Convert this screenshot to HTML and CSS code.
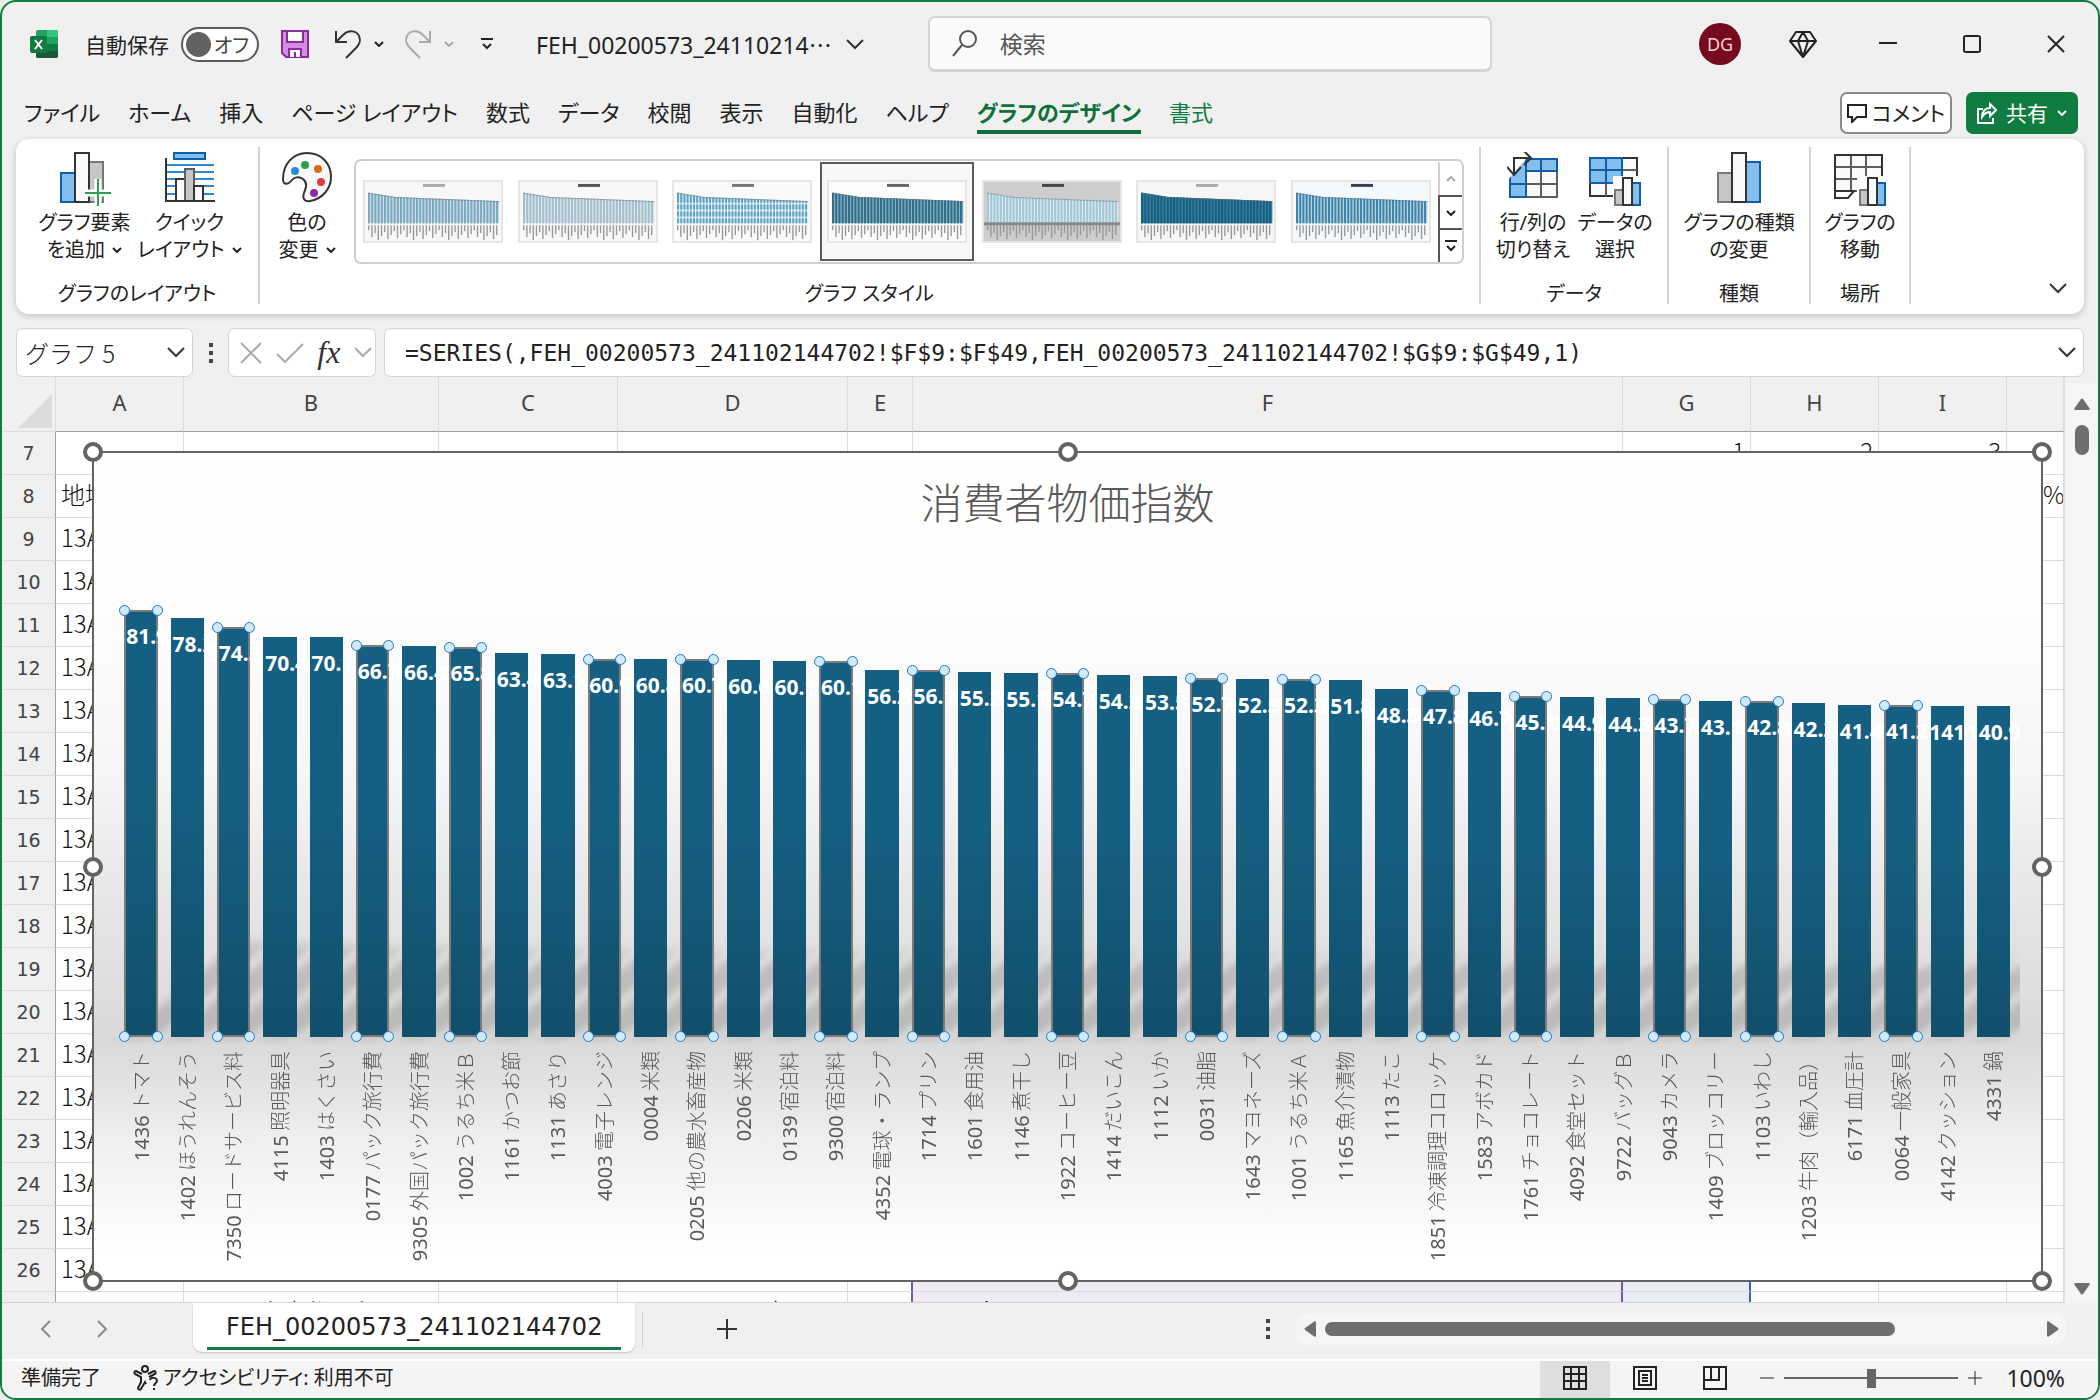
FILE: index.html
```html
<!DOCTYPE html>
<html lang="ja">
<head>
    <meta charset="UTF-8">
    <meta name="viewport" content="width=device-width, initial-scale=1.0">
    <title>FEH_00200573_241102144702 - Excel</title>
    <link rel="stylesheet" href="styles.css">
</head>
<body>
<div class="window">

    <!-- Title bar -->
    <header class="titlebar">
        <svg class="app-icon" width="30" height="30" viewBox="0 0 30 30">
            <rect x="7" y="1" width="22" height="28" rx="2" fill="#21a366"/>
            <path d="M18 1h9a2 2 0 0 1 2 2v5H18z" fill="#33c481"/>
            <path d="M7 8h11v7H7z" fill="#107c41"/>
            <path d="M7 15h11v7H7z" fill="#185c37"/>
            <path d="M18 15h11v7H18z" fill="#107c41"/>
            <path d="M7 22h22v5a2 2 0 0 1-2 2H9a2 2 0 0 1-2-2z" fill="#185c37"/>
            <rect x="1" y="7" width="17" height="17" rx="2" fill="#107c41"/>
            <path d="M6 11l7 9M13 11l-7 9" stroke="#fff" stroke-width="2" fill="none"/>
        </svg>
        <label class="autosave">
            自動保存
            <input type="checkbox" class="autosave-input">
            <span class="switch"><i></i>オフ</span>
        </label>
        <button class="icon-btn save" aria-label="上書き保存">
            <svg width="30" height="30" viewBox="0 0 30 30" fill="none" stroke="#8a2d9c" stroke-width="2">
                <path d="M2 2h26v26H6l-4-4z" fill="#d58be0"/>
                <path d="M7 2h16v11H7z" fill="#fafafa"/>
                <path d="M9 28v-8h12v8" fill="#fafafa"/>
                <path d="M15 23v5"/>
            </svg>
        </button>
        <button class="icon-btn undo" aria-label="元に戻す">
            <svg width="28" height="30" viewBox="0 0 28 30" fill="none" stroke="#333" stroke-width="2">
                <path d="M2 2v11h11M2 13L9 6c6-6 14-4 16 1s1 8-3 12L12 29"/>
            </svg>
            <svg class="caret" width="10" height="6" viewBox="0 0 10 6"><path d="M1 1l4 4 4-4"/></svg>
        </button>
        <button class="icon-btn redo" aria-label="やり直し">
            <svg width="28" height="30" viewBox="0 0 28 30" fill="none" stroke="#aaa" stroke-width="2">
                <path d="M26 2v11H15M26 13l-7-7C13 0 5 2 3 7s-1 8 3 12l10 10"/>
            </svg>
            <svg class="caret light" width="10" height="6" viewBox="0 0 10 6"><path d="M1 1l4 4 4-4"/></svg>
        </button>
        <button class="icon-btn customize" aria-label="クイック アクセス ツール バーのユーザー設定">
            <svg width="14" height="12" viewBox="0 0 14 12" fill="none" stroke="#222" stroke-width="2"><path d="M1 1h12M3 6l4 4 4-4"/></svg>
        </button>
        <button class="filename">FEH_00200573_24110214⋯
            <svg width="18" height="11" viewBox="0 0 18 11"><path d="M1 1l8 8 8-8"/></svg>
        </button>
        <label class="search">
            <svg width="26" height="27" viewBox="0 0 26 27" fill="none" stroke="#555" stroke-width="2"><circle cx="16" cy="9" r="8"/><path d="M10 15L1 26"/></svg>
            <input type="text" placeholder="検索" aria-label="検索">
        </label>
        <div class="window-tools">
            <span class="avatar">DG</span>
            <button class="icon-btn premium" aria-label="Premium">
                <svg width="28" height="27" viewBox="0 0 28 27" fill="none" stroke="#222" stroke-width="2" stroke-linejoin="round">
                    <path d="M7 1h14l6 9-13 16L1 10zM1 10h26M9 10l5 16 5-16M9 10l5-9 5 9"/>
                </svg>
            </button>
            <button class="icon-btn" aria-label="最小化"><svg width="18" height="20" viewBox="0 0 18 20" stroke="#222" stroke-width="2"><path d="M0 9h18"/></svg></button>
            <button class="icon-btn" aria-label="最大化"><svg width="18" height="18" viewBox="0 0 18 18" fill="none" stroke="#222" stroke-width="2"><rect x="1" y="1" width="16" height="16" rx="2"/></svg></button>
            <button class="icon-btn" aria-label="閉じる"><svg width="18" height="18" viewBox="0 0 18 18" fill="none" stroke="#222" stroke-width="2"><path d="M1 1l16 16M17 1L1 17"/></svg></button>
        </div>
    </header>

    <!-- Ribbon tabs -->
    <nav class="tabs">
        <button>ファイル</button>
        <button>ホーム</button>
        <button>挿入</button>
        <button>ページ レイアウト</button>
        <button>数式</button>
        <button>データ</button>
        <button>校閲</button>
        <button>表示</button>
        <button>自動化</button>
        <button>ヘルプ</button>
        <button class="active">グラフのデザイン</button>
        <button class="context">書式</button>
        <div class="tab-actions">
            <button class="comment">
                <svg width="20" height="20" viewBox="0 0 20 20" fill="none" stroke="#222" stroke-width="2"><path d="M1 2h18v12h-9l-5 5v-5H1z"/></svg>
                コメント
            </button>
            <button class="share">
                <svg width="20" height="22" viewBox="0 0 20 22" fill="none" stroke="#fff" stroke-width="2"><path d="M6 7H1v14h15v-5M13 2l6 6-6 6v-4c-4 0-6 2-8 5 0-5 3-9 8-9z"/></svg>
                共有
                <svg class="caret" width="10" height="6" viewBox="0 0 10 6"><path d="M1 1l4 4 4-4"/></svg>
            </button>
        </div>
    </nav>

    <!-- Ribbon -->
    <section class="ribbon">
        <div class="group group-layout">
            <div class="group-body">
                <button class="big">
                    <svg width="52" height="54" viewBox="0 0 52 54" fill="none" stroke-width="2">
                        <rect x="2" y="21" width="14" height="29" fill="#83beec" stroke="#0f5ea8"/>
                        <rect x="30" y="10" width="14" height="40" fill="#c8c6c4" stroke="#797774"/>
                        <rect x="16" y="1" width="14" height="49" fill="#fafafa" stroke="#333"/>
                        <path d="M39 27v27M26 41h26" stroke="#fff" stroke-width="7"/>
                        <path d="M39 27v27M26 41h26" stroke="#2f9e58"/>
                    </svg>
                    <span>グラフ要素<br>を追加 <svg class="caret" width="10" height="6" viewBox="0 0 10 6"><path d="M1 1l4 4 4-4"/></svg></span>
                </button>
                <button class="big">
                    <svg width="52" height="54" viewBox="0 0 52 54" fill="none" stroke-width="2">
                        <rect x="10" y="1" width="31" height="6" fill="#83beec" stroke="#0f5ea8"/>
                        <path d="M2 13h48M2 20h48M2 27h48M2 34h48M2 42h48" stroke="#2b88d8"/>
                        <rect x="12" y="27" width="9" height="22" fill="#fafafa" stroke="#333"/>
                        <rect x="21" y="17" width="9" height="32" fill="#c8c6c4" stroke="#605e5c"/>
                        <rect x="30" y="34" width="9" height="15" fill="#fafafa" stroke="#333"/>
                        <path d="M2 6v43h49" stroke="#333"/>
                    </svg>
                    <span>クイック<br>レイアウト <svg class="caret" width="10" height="6" viewBox="0 0 10 6"><path d="M1 1l4 4 4-4"/></svg></span>
                </button>
            </div>
            <div class="group-name">グラフのレイアウト</div>
        </div>

        <div class="group group-styles">
            <div class="group-body">
                <button class="big">
                    <svg width="52" height="54" viewBox="0 0 52 54">
                        <path d="M26 1C12 1 2 12 2 27c0 6 5 6 8 2s8-5 12-2c5 4 3 9 1 14-2 6 1 9 6 8 12-2 21-12 21-24C50 11 40 1 26 1z" fill="#fafafa" stroke="#333" stroke-width="2"/>
                        <circle cx="14" cy="19" r="4" fill="#2b88d8"/>
                        <circle cx="24" cy="13" r="4" fill="#2f9e48"/>
                        <circle cx="37" cy="17" r="4" fill="#d86c12"/>
                        <circle cx="40" cy="30" r="4" fill="#e23b3f"/>
                        <circle cx="33" cy="41" r="4" fill="#8a2da5"/>
                    </svg>
                    <span>色の<br>変更 <svg class="caret" width="10" height="6" viewBox="0 0 10 6"><path d="M1 1l4 4 4-4"/></svg></span>
                </button>
                <div class="gallery">
                    <div class="thumbs" id="thumbs"></div>
                    <div class="gallery-scroll">
                        <button class="off" aria-label="上へ"><svg class="caret" width="10" height="6" viewBox="0 0 10 6"><path d="M1 5l4-4 4 4"/></svg></button>
                        <button aria-label="下へ"><svg class="caret" width="10" height="6" viewBox="0 0 10 6"><path d="M1 1l4 4 4-4"/></svg></button>
                        <button aria-label="その他"><svg class="caret" width="12" height="12" viewBox="0 0 12 12"><path d="M0 1h12M2 6l4 4 4-4"/></svg></button>
                    </div>
                </div>
            </div>
            <div class="group-name">グラフ スタイル</div>
        </div>

        <div class="group group-data">
            <div class="group-body">
                <button class="big">
                    <svg width="52" height="54" viewBox="0 0 52 54" fill="none" stroke-width="2">
                        <rect x="3" y="7" width="47" height="38" fill="#fafafa" stroke="#333"/>
                        <path d="M3 7h47v12H19v26H3z" fill="#83beec"/>
                        <path d="M19 32h31M34 19v26M19 45h31V19" stroke="#605e5c"/>
                        <path d="M50 7H19v12h31zM34 7v12M3 19v26h16V19M3 32h16" stroke="#0f5ea8"/>
                        <path d="M0 0h25L0 29z" fill="#fff"/>
                        <path d="M7 22V6h16M17-1l7 7-7 7M0 15l7 8 7-8" stroke="#333"/>
                    </svg>
                    <span>行/列の<br>切り替え</span>
                </button>
                <button class="big">
                    <svg width="52" height="54" viewBox="0 0 52 54" fill="none" stroke-width="2">
                        <rect x="1" y="6" width="47" height="38" fill="#fafafa" stroke="#333"/>
                        <path d="M33 18h15M1 31h47M17 31v13" stroke="#605e5c"/>
                        <path d="M1 6h32v25H1zM17 6v25M1 18h32" fill="#83beec" stroke="#0f5ea8"/>
                        <path d="M24 36V24h28v30H24z" fill="#fff"/>
                        <rect x="26" y="38" width="8" height="15" fill="#c8c6c4" stroke="#797774"/>
                        <rect x="43" y="31" width="8" height="22" fill="#83beec" stroke="#0f5ea8"/>
                        <rect x="34" y="26" width="9" height="27" fill="#fafafa" stroke="#333"/>
                    </svg>
                    <span>データの<br>選択</span>
                </button>
            </div>
            <div class="group-name">データ</div>
        </div>

        <div class="group group-type">
            <div class="group-body">
                <button class="big">
                    <svg width="52" height="54" viewBox="0 0 52 54" fill="none" stroke-width="2">
                        <rect x="5" y="21" width="14" height="29" fill="#c8c6c4" stroke="#797774"/>
                        <rect x="33" y="10" width="14" height="40" fill="#83beec" stroke="#0f5ea8"/>
                        <rect x="19" y="1" width="14" height="49" fill="#fafafa" stroke="#333"/>
                    </svg>
                    <span>グラフの種類<br>の変更</span>
                </button>
            </div>
            <div class="group-name">種類</div>
        </div>

        <div class="group group-place">
            <div class="group-body">
                <button class="big">
                    <svg width="52" height="54" viewBox="0 0 52 54" fill="none" stroke-width="2">
                        <path d="M1 3h47v36H1zM1 15h47M1 27h47M17 3v36M32 3v36" fill="#fafafa" stroke="#605e5c"/>
                        <path d="M48 24V3H1v43h13l6-7H1" stroke="#333"/>
                        <path d="M23 36V24h29v30H23z" fill="#fff"/>
                        <rect x="26" y="38" width="8" height="15" fill="#c8c6c4" stroke="#797774"/>
                        <rect x="43" y="31" width="8" height="22" fill="#83beec" stroke="#0f5ea8"/>
                        <rect x="34" y="26" width="9" height="27" fill="#fafafa" stroke="#333"/>
                    </svg>
                    <span>グラフの<br>移動</span>
                </button>
            </div>
            <div class="group-name">場所</div>
        </div>
        <button class="collapse" aria-label="リボンを折りたたむ"><svg width="18" height="11" viewBox="0 0 18 11"><path d="M1 1l8 8 8-8"/></svg></button>
    </section>

    <!-- Formula bar -->
    <section class="formula-bar">
        <div class="box name-box">
            <input type="text" value="グラフ 5" aria-label="名前ボックス">
            <button aria-label="名前の一覧"><svg width="18" height="11" viewBox="0 0 18 11"><path d="M1 1l8 8 8-8"/></svg></button>
        </div>
        <span class="dots"><i></i><i></i><i></i></span>
        <div class="box fx-box">
            <button aria-label="キャンセル"><svg class="dim" width="22" height="22" viewBox="0 0 22 22"><path d="M1 1l20 20M21 1L1 21"/></svg></button>
            <button aria-label="入力"><svg class="dim" width="28" height="20" viewBox="0 0 28 20"><path d="M1 11l8 8L27 1"/></svg></button>
            <button class="fx" aria-label="関数の挿入">fx</button>
            <button aria-label="関数の一覧"><svg class="dim" width="18" height="11" viewBox="0 0 18 11"><path d="M1 1l8 8 8-8"/></svg></button>
        </div>
        <div class="box formula-box">
            <input type="text" aria-label="数式バー" value="=SERIES(,FEH_00200573_241102144702!$F$9:$F$49,FEH_00200573_241102144702!$G$9:$G$49,1)">
            <button aria-label="数式バーの展開"><svg width="18" height="11" viewBox="0 0 18 11"><path d="M1 1l8 8 8-8"/></svg></button>
        </div>
    </section>

    <!-- Sheet with the chart on top -->
    <main class="sheet">
        <div class="grid">
            <table>
                <colgroup>
                    <col class="c-head"><col class="c-a"><col class="c-b"><col class="c-c"><col class="c-d">
                    <col class="c-e"><col class="c-f"><col class="c-g"><col class="c-h"><col class="c-i"><col>
                </colgroup>
                <thead>
                    <tr>
                        <th class="corner"><svg width="34" height="34" viewBox="0 0 34 34"><path d="M34 0v34H0z" fill="#dcdcdc"/></svg></th>
                        <th>A</th><th>B</th><th>C</th><th>D</th><th>E</th><th>F</th><th>G</th><th>H</th><th>I</th><th></th>
                    </tr>
                </thead>
                <tbody id="rows"></tbody>
            </table>

            <div class="chart">
                <h1>消費者物価指数</h1>
                <div class="plot" id="plot"></div>
                <div class="axis" id="axis"></div>
                <i class="handle n w"></i><i class="handle n m"></i><i class="handle n e"></i>
                <i class="handle c w"></i><i class="handle c e"></i>
                <i class="handle s w"></i><i class="handle s m"></i><i class="handle s e"></i>
            </div>
        </div>
        <div class="vscroll">
            <svg width="16" height="12" viewBox="0 0 16 12"><path d="M7 1q1-1 2 0l7 10-1 1H1l-1-1z"/></svg>
            <span class="vthumb"></span>
            <svg class="down" width="16" height="12" viewBox="0 0 16 12"><path d="M7 11q1 1 2 0l7-10-1-1H1L0 1z"/></svg>
        </div>
    </main>

    <!-- Sheet tabs -->
    <section class="sheetbar">
        <button class="step" aria-label="前のシート"><svg width="11" height="18" viewBox="0 0 11 18"><path d="M10 1L2 9l8 8"/></svg></button>
        <button class="step" aria-label="次のシート"><svg width="11" height="18" viewBox="0 0 11 18"><path d="M1 1l8 8-8 8"/></svg></button>
        <button class="sheet-tab"><span>FEH_00200573_241102144702</span></button>
        <button class="add" aria-label="新しいシート"><svg width="20" height="20" viewBox="0 0 20 20"><path d="M10 0v20M0 10h20"/></svg></button>
        <span class="dots"><i></i><i></i><i></i></span>
        <div class="hscroll">
            <svg width="12" height="16" viewBox="0 0 12 16"><path d="M1 7q-1 1 0 2l10 7 1-1V1l-1-1z"/></svg>
            <div class="htrack"><span class="hthumb"></span></div>
            <svg width="12" height="16" viewBox="0 0 12 16"><path d="M11 7q1 1 0 2L1 16l-1-1V1l1-1z"/></svg>
        </div>
    </section>

    <!-- Status bar -->
    <footer class="status">
        <span>準備完了</span>
        <button class="access">
            <svg width="26" height="26" viewBox="0 0 26 26" fill="none" stroke="#222" stroke-width="2">
                <circle cx="12" cy="4" r="3"/>
                <path d="M15 9l6-3c2 0 2 2 1 3l-6 3M9 9L3 6C1 6 1 8 2 9l6 3v5L5 23c0 2 2 2 3 1l4-7 1 2"/>
                <path d="M17 15c1-3 7-3 7 1 0 2-3 2-3 5M21 23v2"/>
            </svg>
            アクセシビリティ: 利用不可
        </button>
        <div class="views">
            <button class="on" aria-label="標準"><svg width="24" height="24" viewBox="0 0 24 24"><path d="M1 1h22v22H1zM1 8h22M1 15h22M8 1v22M16 1v22"/></svg></button>
            <button aria-label="ページ レイアウト"><svg width="24" height="24" viewBox="0 0 24 24"><path d="M1 1h22v22H1zM6 5h12v14H6zM9 9h6M9 12h6M9 15h6"/></svg></button>
            <button aria-label="改ページ プレビュー"><svg width="24" height="24" viewBox="0 0 24 24"><path d="M1 1h22v22H1zM8 1v13H1M8 14h8V1"/></svg></button>
        </div>
        <div class="zoom">
            <button aria-label="縮小"><svg width="14" height="14" viewBox="0 0 14 14"><path d="M0 7h14"/></svg></button>
            <input type="range" min="0" max="100" value="50" aria-label="ズーム">
            <button aria-label="拡大"><svg width="14" height="14" viewBox="0 0 14 14"><path d="M0 7h14M7 0v14"/></svg></button>
            <button class="percent">100%</button>
        </div>
    </footer>
</div>
<script src="script.js"></script>
</body>
</html>
```
FILE: styles.css
```css
* {
    box-sizing: border-box;
}
body {
    margin: 0;
    background: #e8efe9;
    color: #222;
    font-family: "Noto Sans", "Noto Sans CJK JP", sans-serif;
    font-size: 21px;
    font-feature-settings: "palt";
}
button, input {
    font: inherit;
    font-feature-settings: inherit;
    color: inherit;
    background: none;
    border: none;
    padding: 0;
    margin: 0;
    min-width: 0;
}
button {
    cursor: pointer;
    white-space: nowrap;
}
svg {
    display: block;
    flex: none;
}
.window {
    display: flex;
    flex-direction: column;
    height: 100vh;
    background: #f0f0f0;
    border: 2px solid #107c41;
    border-radius: 16px;
    overflow: hidden;
}
.caret {
    fill: none;
    stroke: #222;
    stroke-width: 2;
}
.caret.light {
    stroke: #aaa;
}

/* Title bar */
.titlebar {
    display: flex;
    align-items: center;
    flex: none;
    height: 84px;
    padding: 0 33px 0 27px;
}
.icon-btn {
    display: flex;
    align-items: center;
    gap: 12px;
}
.autosave {
    display: flex;
    align-items: center;
    gap: 12px;
    margin-left: 26px;
}
.autosave-input {
    position: absolute;
    opacity: 0;
}
.switch {
    display: flex;
    align-items: center;
    justify-content: space-between;
    width: 78px;
    height: 35px;
    padding: 0 8px 0 3px;
    background: #fff;
    border: 2px solid #5c5c5c;
    border-radius: 18px;
    color: #444;
    font-size: 20px;
}
.switch i {
    width: 25px;
    height: 25px;
    border-radius: 50%;
    background: #616161;
}
.save {
    margin-left: 21px;
}
.undo {
    margin-left: 24px;
}
.redo {
    margin-left: 20px;
}
.customize {
    margin-left: 26px;
}
.filename {
    display: flex;
    align-items: center;
    gap: 14px;
    margin-left: 42px;
    font-size: 23px;
}
.filename svg, .collapse svg, .box svg, .step svg, .add svg {
    fill: none;
    stroke: #333;
    stroke-width: 2;
}
.search {
    display: flex;
    align-items: center;
    gap: 22px;
    flex: 0 1 564px;
    height: 56px;
    margin-left: 64px;
    padding: 0 22px;
    background: #fafafa;
    border: 2px solid #d4d4d4;
    border-bottom-width: 3px;
    border-radius: 7px;
    font-size: 23px;
}
.search input {
    flex: 1;
    outline: none;
}
.search input::placeholder {
    color: #555;
    opacity: 1;
}
.window-tools {
    display: flex;
    align-items: center;
    gap: 66px;
    margin-left: auto;
}
.avatar {
    width: 42px;
    height: 42px;
    margin-right: -18px;
    border-radius: 50%;
    background: #750b1c;
    color: #f0d0d4;
    font-size: 18px;
    line-height: 42px;
    text-align: center;
}
.premium {
    margin-right: -4px;
}

/* Ribbon tabs */
.tabs {
    display: flex;
    align-items: center;
    gap: 28px;
    flex: none;
    height: 53px;
    padding: 0 20px 0 22px;
    font-size: 22px;
}
.tabs > button {
    height: 43px;
    padding-top: 2px;
    border-bottom: 4px solid transparent;
    line-height: 34px;
}
.tabs .active {
    color: #0f703b;
    border-bottom-color: #0f703b;
    font-weight: bold;
}
.tabs .context {
    color: #107c41;
}
.tab-actions {
    display: flex;
    gap: 14px;
    margin-left: auto;
    font-size: 21px;
}
.tab-actions button {
    display: flex;
    align-items: center;
    justify-content: center;
    gap: 5px;
    width: 112px;
    height: 42px;
    border-radius: 7px;
    line-height: 30px;
}
.comment {
    background: #fff;
    border: 2px solid #8a8a8a;
}
.tab-actions .share {
    gap: 9px;
    background: #107c41;
    color: #fff;
}
.share .caret {
    stroke: #fff;
}

/* Ribbon */
.ribbon {
    display: flex;
    flex: none;
    height: 175px;
    margin: 0 14px;
    padding: 8px 0 10px;
    background: #fff;
    border-radius: 13px;
    box-shadow: 0 2px 6px rgba(0, 0, 0, 0.2);
    font-size: 20px;
}
.group {
    display: flex;
    flex-direction: column;
    border-right: 2px solid #d4d4d4;
}
.group-body {
    display: flex;
    justify-content: center;
    flex: 1;
}
.group-name {
    height: 20px;
    line-height: 20px;
    text-align: center;
}
.group-layout {
    width: 244px;
}
.group-layout .big {
    width: 105px;
}
.group-styles {
    flex: 0 1 1221px;
    min-width: 0;
}
.group-styles .group-body {
    justify-content: flex-start;
}
.group-styles .big {
    flex: none;
    width: 94px;
}
.group-data {
    width: 188px;
}
.group-data .big {
    width: 82px;
}
.group-type {
    width: 142px;
}
.group-place {
    width: 100px;
}
.big {
    display: flex;
    flex-direction: column;
    align-items: center;
    gap: 3px;
    padding-top: 5px;
    line-height: 27px;
}
.big .caret {
    display: inline-block;
    margin: 0 0 4px 2px;
}
.gallery {
    display: flex;
    flex: 0 1 1110px;
    min-width: 0;
    height: 105px;
    margin-top: 12px;
    border: 2px solid #cfcfcf;
    border-radius: 7px;
    overflow: hidden;
}
.thumbs {
    display: flex;
    flex: 1;
    min-width: 0;
}
.thumb {
    display: flex;
    align-items: center;
    justify-content: center;
    flex: 1;
    margin: 1px 0;
    border: 2px solid transparent;
}
.thumb svg {
    width: 93%;
    height: 63px;
}
.thumb.selected {
    border-color: #5c5c5c;
    background: #f7f7f7;
}
.gallery-scroll {
    display: flex;
    flex-direction: column;
    width: 24px;
}
.gallery-scroll button {
    display: flex;
    align-items: center;
    justify-content: center;
    flex: 1;
    border: 2px solid #555;
    border-width: 2px 0 0 2px;
}
.gallery-scroll .off {
    border-color: transparent transparent transparent #cfcfcf;
}
.gallery-scroll .off .caret {
    stroke: #aaa;
}
.collapse {
    margin: auto 17px 10px auto;
}

/* Formula bar */
.formula-bar {
    display: flex;
    align-items: center;
    flex: none;
    gap: 9px;
    height: 49px;
    margin: 14px 14px 0;
}
.box {
    display: flex;
    align-items: center;
    height: 49px;
    background: #fff;
    border: 1px solid #d4d4d4;
    border-radius: 7px;
}
.name-box {
    width: 177px;
    padding: 0 7px 0 8px;
    font-family: "Noto Sans CJK JP", sans-serif;
    font-size: 24px;
    font-weight: 300;
    font-feature-settings: normal;
}
.name-box input {
    flex: 1;
}
.dots {
    display: flex;
    flex-direction: column;
    justify-content: center;
    gap: 4px;
    width: 17px;
    align-items: center;
}
.dots i {
    width: 4px;
    height: 4px;
    background: #444;
}
.fx-box {
    justify-content: space-between;
    width: 148px;
    padding: 0 3px 0 11px;
}
.box .dim {
    stroke: #aaa;
}
.fx {
    font: italic 32px "Liberation Serif", serif;
    color: #333;
}
.formula-box {
    flex: 1;
    margin-left: -1px;
    padding: 0 7px 0 20px;
    font-family: "DejaVu Sans Mono", monospace;
    font-size: 23px;
}
.formula-box input {
    flex: 1;
    height: 44px;
    line-height: 44px;
}

/* Sheet */
.sheet {
    display: flex;
    flex: 1;
    min-height: 0;
}
.grid {
    flex: 1;
    min-width: 0;
    overflow: hidden;
    position: relative;
    border-bottom: 1px solid #d4d4d4;
    border-right: 1px solid #e0e0e0;
}
table {
    width: 100%;
    table-layout: fixed;
    border-collapse: separate;
    border-spacing: 0;
    background: #fff;
}
.c-head { width: 54px; }
.c-a, .c-g, .c-h, .c-i { width: 128px; }
.c-b { width: 255px; }
.c-c { width: 179px; }
.c-d { width: 230px; }
.c-e { width: 65px; }
.c-f { width: 710px; }
th {
    height: 43px;
    padding: 0;
    background: #f0f0f0;
    border-right: 1px solid #dcdcdc;
    border-bottom: 1px solid #dcdcdc;
    color: #444;
    font-family: "Noto Sans", sans-serif;
    font-size: 22px;
    font-weight: normal;
}
thead th {
    height: 55px;
    padding-bottom: 4px;
    border-bottom-color: #a0a0a0;
}
tbody th {
    border-right-color: #a0a0a0;
    font-family: "DejaVu Sans", sans-serif;
    font-size: 19px;
}
thead .corner {
    vertical-align: bottom;
    padding: 0 3px 3px 16px;
    border-bottom-color: #dcdcdc;
}
td {
    height: 43px;
    padding: 0 5px 5px;
    border-right: 1px solid #dcdcdc;
    border-bottom: 1px solid #dcdcdc;
    color: #111;
    font-family: "Noto Sans CJK JP", sans-serif;
    font-size: 24px;
    font-weight: 300;
    font-feature-settings: normal;
    line-height: 30px;
    white-space: nowrap;
    overflow: hidden;
}
.num {
    text-align: right;
}
.unit {
    padding-left: 12px;
}
.ref-e {
    border-right: 2px solid #7a55a8;
}
.ref-f {
    background: #eeebf6;
    border-right: 2px solid #7a55a8;
}
.ref-g {
    background: #e8edf7;
    border-right: 2px solid #3a63bd;
}

/* Chart */
.chart {
    display: flex;
    flex-direction: column;
    position: absolute;
    inset: 74px 21px 20px 90px;
    border: 2px solid #636363;
    background: linear-gradient(#fff 0%, #fdfdfd 20%, #f6f6f6 38%, #e8e8e8 52%, #d9d9d9 71%, #efefef 83%, #fff 97%);
    color: #595959;
}
.chart h1 {
    margin: 0;
    height: 114px;
    font-family: "Noto Sans CJK JP", sans-serif;
    font-size: 42px;
    font-weight: 300;
    font-feature-settings: normal;
    line-height: 96px;
    text-align: center;
}
.plot, .axis {
    display: flex;
    margin: 0 24px;
}
.plot {
    flex: 1;
    align-items: flex-end;
    isolation: isolate;
    clip-path: inset(0 -3px -7px -7px);
}
.slot {
    display: flex;
    justify-content: center;
    align-items: flex-end;
    flex: 1;
    min-width: 0;
    height: 100%;
}
.bar {
    width: 72%;
    position: relative;
    display: flex;
    justify-content: center;
    padding-top: 13px;
    background: linear-gradient(#156082 40%, #114f6b);
    color: #fff;
    font-size: 21px;
    font-weight: bold;
    line-height: 26px;
}
.bar::before {
    content: "";
    position: absolute;
    z-index: -1;
    left: 0;
    bottom: 0;
    width: 100%;
    height: 22%;
    background: rgba(70, 70, 70, 0.22);
    transform: skewX(-50deg);
    transform-origin: bottom;
    filter: blur(6px);
}
.bar.picked {
    box-shadow: inset 0 0 0 2px #7b7b7b;
}
.dot {
    position: absolute;
    width: 11px;
    height: 11px;
    border: 1px solid #2477b8;
    border-radius: 50%;
    background: #cfeafc;
}
.dot.tl { left: -5px; top: -5px; }
.dot.tr { right: -5px; top: -5px; }
.dot.bl { left: -5px; bottom: -5px; }
.dot.br { right: -5px; bottom: -5px; }
.axis {
    height: 243px;
    padding-top: 14px;
    font-size: 20px;
    font-feature-settings: normal;
}
.axis div {
    display: flex;
    justify-content: center;
    flex: 1;
    min-width: 0;
}
.axis span {
    align-self: flex-start;
    writing-mode: vertical-rl;
    text-orientation: sideways;
    transform: rotate(180deg);
    white-space: nowrap;
    line-height: 30px;
    font-family: "Noto Sans CJK JP", sans-serif;
    font-weight: 300;
}
.axis b {
    font-family: "Noto Sans", sans-serif;
    font-weight: 400;
}
.handle {
    position: absolute;
    width: 20px;
    height: 20px;
    border: 4px solid #636363;
    border-radius: 50%;
    background: #fff;
}
.handle.n { top: -11px; }
.handle.s { bottom: -11px; }
.handle.c { top: calc(50% - 10px); }
.handle.w { left: -11px; }
.handle.e { right: -11px; }
.handle.m { left: calc(50% - 10px); }

/* Scroll bars */
.vscroll {
    display: flex;
    flex-direction: column;
    align-items: center;
    gap: 15px;
    width: 33px;
    margin-top: 6px;
    padding: 15px 0 8px;
    background: #f5f5f5;
}
.vscroll svg, .hscroll svg {
    fill: #6e6e6e;
}
.vthumb {
    width: 14px;
    height: 30px;
    border-radius: 7px;
    background: #6e6e6e;
}
.down {
    margin-top: auto;
}

/* Sheet tabs */
.sheetbar {
    display: flex;
    align-items: center;
    flex: none;
    height: 56px;
    padding: 0 32px 4px 38px;
}
.step {
    width: 17px;
    margin-right: 40px;
}
.step svg {
    stroke: #8a8a8a;
}
.sheet-tab {
    align-self: flex-start;
    height: 49px;
    margin-left: 39px;
    padding: 0 14px;
    background: #fff;
    border-radius: 0 0 9px 9px;
    box-shadow: 0 1px 2px rgba(0, 0, 0, 0.2);
    font-family: "DejaVu Sans", sans-serif;
    font-size: 24px;
}
.sheet-tab span {
    display: block;
    height: 45px;
    padding: 0 19px;
    border-bottom: 3px solid #1b7a48;
    line-height: 44px;
}
.add {
    margin: 0 auto 0 7px;
    padding: 8px 0 8px 74px;
    border-left: 1px solid #d0d0d0;
}
.hscroll {
    display: flex;
    align-items: center;
    gap: 9px;
    flex: 0 0 38%;
    height: 32px;
    margin-left: 20px;
    padding: 0 7px 0 8px;
    background: #f5f5f5;
    border-radius: 12px;
}
.htrack {
    flex: 1;
}
.hthumb {
    display: block;
    width: 80%;
    height: 14px;
    border-radius: 7px;
    background: #6e6e6e;
}

/* Status bar */
.status {
    display: flex;
    align-items: center;
    flex: none;
    height: 39px;
    padding: 0 33px 0 19px;
    background: #f4f4f4;
    border-top: 2px solid #fff;
    font-size: 20px;
    line-height: 30px;
}
.status > span, .access, .zoom {
    padding-bottom: 3px;
}
.access {
    display: flex;
    align-items: center;
    gap: 4px;
    margin-left: 32px;
}
.views {
    display: flex;
    align-self: stretch;
    margin-left: auto;
}
.views button {
    display: flex;
    align-items: center;
    justify-content: center;
    width: 70px;
    padding-bottom: 3px;
}
.views .on {
    background: #dedede;
}
.views svg, .zoom svg {
    fill: none;
    stroke: #222;
    stroke-width: 2;
}
.zoom {
    display: flex;
    align-items: center;
    gap: 10px;
    margin-left: 10px;
}
.zoom svg {
    stroke-width: 1;
}
.zoom input {
    appearance: none;
    width: 174px;
    height: 20px;
    background: linear-gradient(#666, #666) center / 100% 2px no-repeat;
}
.zoom input::-webkit-slider-thumb {
    appearance: none;
    width: 9px;
    height: 19px;
    background: #666;
}
.percent {
    margin-left: 14px;
    font-size: 23px;
}
```
FILE: script.js
```js
// [code, name, value, selected in the chart]
const items = [
    ['1436', 'トマト', '181.9', 1],
    ['1402', 'ほうれんそう', '178.2'],
    ['7350', 'ロードサービス料', '174.3', 1],
    ['4115', '照明器具', '170.4'],
    ['1403', 'はくさい', '170.1'],
    ['0177', 'パック旅行費', '166.7', 1],
    ['9305', '外国パック旅行費', '166.4'],
    ['1002', 'うるち米Ｂ', '165.8', 1],
    ['1161', 'かつお節', '163.4'],
    ['1131', 'あさり', '163.1'],
    ['4003', '電子レンジ', '160.9', 1],
    ['0004', '米類', '160.8'],
    ['0205', '他の農水畜産物', '160.7', 1],
    ['0206', '米類', '160.6'],
    ['0139', '宿泊料', '160.1'],
    ['9300', '宿泊料', '160.1', 1],
    ['4352', '電球・ランプ', '156.2'],
    ['1714', 'プリン', '156.1', 1],
    ['1601', '食用油', '155.2'],
    ['1146', '煮干し', '155.1'],
    ['1922', 'コーヒー豆', '154.7', 1],
    ['1414', 'だいこん', '154.2'],
    ['1112', 'いか', '153.5'],
    ['0031', '油脂', '152.7', 1],
    ['1643', 'マヨネーズ', '152.5'],
    ['1001', 'うるち米Ａ', '152.3', 1],
    ['1165', '魚介漬物', '151.8'],
    ['1113', 'たこ', '148.3'],
    ['1851', '冷凍調理コロッケ', '147.8', 1],
    ['1583', 'アボカド', '146.7'],
    ['1761', 'チョコレート', '145.1', 1],
    ['4092', '食堂セット', '144.9'],
    ['9722', 'バッグＢ', '144.3'],
    ['9043', 'カメラ', '143.7', 1],
    ['1409', 'ブロッコリー', '143.1'],
    ['1103', 'いわし', '142.8', 1],
    ['1203', '牛肉（輸入品）', '142.2'],
    ['6171', '血圧計', '141.4'],
    ['0064', '一般家具', '141.2', 1],
    ['4142', 'クッション', '141'],
    ['4331', '鍋', '140.9']
];
const axisMax = 200;

const dots = '<i class="dot tl"></i><i class="dot tr"></i><i class="dot bl"></i><i class="dot br"></i>';
document.getElementById('plot').innerHTML = items.map(([, , value, picked]) =>
    `<div class="slot"><div class="bar${picked ? ' picked' : ''}" style="height: ${value / axisMax * 100}%">${value}${picked ? dots : ''}</div></div>`
).join('');
document.getElementById('axis').innerHTML = items.map(([code, name]) =>
    `<div><span><b>${code}</b> ${name}</span></div>`
).join('');

// Cells around the chart
const cells = {
    7: { G: '1', H: '2', I: '3' },
    8: { A: '地域', J: '（%）' },
    27: { B: '13100 東京都区部', D: '2024年10月', F: '1471 食パン' }
};
let html = '';
for (let row = 7; row <= 27; row++) {
    html += `<tr><th>${row}</th>`;
    for (const col of 'ABCDEFGHIJ') {
        let text = (cells[row] || {})[col] || '';
        if (col === 'A' && row > 8) text = '13A01';
        const names = [];
        if (/^(\d|2024年10月)$/.test(text)) names.push('num');
        if (text === '（%）') names.push('unit');
        if (row > 8 && 'EFG'.includes(col)) names.push('ref-' + col.toLowerCase());
        html += `<td class="${names.join(' ')}">${text}</td>`;
    }
    html += '</tr>';
}
document.getElementById('rows').innerHTML = html;

// Chart style previews: [background, bar colour, gap colour, title colour]
const looks = [
    ['#f8f8f8', '#7ba9bf', '#cfe0e8', '#aaa'],
    ['#f8f8f8', '#a3bfcc', '#dde6ea', '#555'],
    ['#fafafa', '#5fa3c2', '#d8ecf5', '#777'],
    ['#fbfbfb', '#2f6d8a', '#86afc2', '#666'],
    ['#cdcdcd', '#a2c6d4', '#daecf2', '#444'],
    ['#f6f6f6', '#165f80', '#347b9b', '#aaa'],
    ['#f4f9fd', '#3f83a8', '#b8d8e8', '#345']
];
document.getElementById('thumbs').innerHTML = looks.map(([bg, bar, gap, title], n) => {
    let shapes = `<rect width="140" height="64" fill="#e6e6e6"/><rect x="2" y="2" width="136" height="60" fill="${bg}"/>`;
    shapes += `<rect x="60" y="4" width="22" height="3" fill="${title}"/>`;
    for (let i = 0; i < 41; i++) {
        const x = 5 + i * 3.2;
        const top = 13 + Math.min(i, 8) * 0.4 + i * 0.13;
        const len = 5 + (i * 7) % 11;
        shapes += `<rect x="${x}" y="${top}" width="3.3" height="${44 - top}" fill="${gap}"/>`;
        shapes += `<rect x="${x}" y="${top}" width="2" height="${44 - top}" fill="${bar}"/>`;
        shapes += `<rect x="${x}" y="${top}" width="3.3" height="1" fill="#667" opacity="0.5"/>`;
        shapes += `<rect x="${x}" y="46" width="1.4" height="${len}" fill="#999"/>`;
    }
    if (n === 2) shapes += '<path d="M4 24h132M4 31h132M4 38h132" stroke="#fff" stroke-width="2" opacity="0.6"/>';
    if (n === 4) shapes += '<rect x="2" y="43" width="136" height="3" fill="#888"/>';
    return `<button class="thumb${n === 3 ? ' selected' : ''}" aria-label="スタイル ${n + 1}"><svg viewBox="0 0 140 64" preserveAspectRatio="none">${shapes}</svg></button>`;
}).join('');
```
